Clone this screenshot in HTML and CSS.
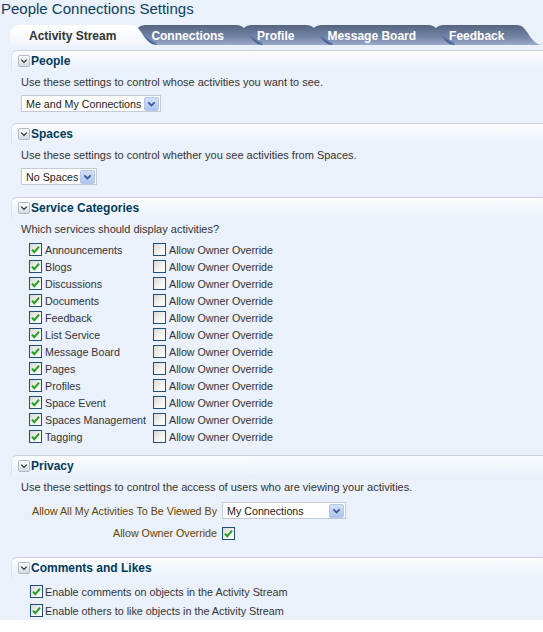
FILE: index.html
```html
<!DOCTYPE html>
<html>
<head>
<meta charset="utf-8">
<link rel="stylesheet" href="styles.css">
</head>
<body>
<div class="page">
  <h1 class="title">People Connections Settings</h1>
  <div class="tabs">
    <div class="tab active"><span class="tab-body">Activity Stream</span><svg class="tab-end" width="32" height="20" viewBox="0 0 32 20"><defs><linearGradient id="ga" x1="0" y1="0" x2="0" y2="1"><stop offset="0" stop-color="#ffffff"/><stop offset="1" stop-color="#f1f5fb"/></linearGradient></defs><path d="M0 0 H5 C12 0 14 4 18 10 C22 16 26 20 32 20 H0 Z" fill="url(#ga)"/></svg></div>
    <div class="tab"><span class="tab-body">Connections</span><svg class="tab-end" width="32" height="20" viewBox="0 0 32 20"><defs><linearGradient id="gi1" x1="0" y1="0" x2="0" y2="1"><stop offset="0" stop-color="#56647f"/><stop offset="0.6" stop-color="#7384a7"/><stop offset="1" stop-color="#9aabca"/></linearGradient></defs><path d="M0 0 H5 C12 0 14 4 18 10 C22 16 26 20 32 20 H0 Z" fill="url(#gi1)"/></svg></div>
    <div class="tab"><span class="tab-body">Profile</span><svg class="tab-end" width="32" height="20" viewBox="0 0 32 20"><path d="M0 0 H5 C12 0 14 4 18 10 C22 16 26 20 32 20 H0 Z" fill="url(#gi1)"/></svg></div>
    <div class="tab"><span class="tab-body">Message Board</span><svg class="tab-end" width="32" height="20" viewBox="0 0 32 20"><path d="M0 0 H5 C12 0 14 4 18 10 C22 16 26 20 32 20 H0 Z" fill="url(#gi1)"/></svg></div>
    <div class="tab"><span class="tab-body">Feedback</span><svg class="tab-end" width="32" height="20" viewBox="0 0 32 20"><path d="M0 0 H5 C12 0 14 4 18 10 C22 16 26 20 32 20 H0 Z" fill="url(#gi1)"/></svg></div>
  </div>

  <div class="section">
    <div class="section-head"><span class="toggle"><svg width="10" height="10" viewBox="0 0 10 10"><path d="M2.2 3.6 L5 6.4 L7.8 3.6" fill="none" stroke="#2a2a2a" stroke-width="1.2"/></svg></span><span class="head-text">People</span></div>
    <div class="section-body">
      <div class="desc">Use these settings to control whose activities you want to see.</div>
      <div class="select w140"><span class="sel-text">Me and My Connections</span><span class="sel-btn"><svg width="15" height="14" viewBox="0 0 15 14"><path d="M3.8 5 L7.5 8.7 L11.2 5" fill="none" stroke="#3a5a9c" stroke-width="2"/></svg></span></div>
    </div>
  </div>

  <div class="section">
    <div class="section-head"><span class="toggle"><svg width="10" height="10" viewBox="0 0 10 10"><path d="M2.2 3.6 L5 6.4 L7.8 3.6" fill="none" stroke="#2a2a2a" stroke-width="1.2"/></svg></span><span class="head-text">Spaces</span></div>
    <div class="section-body pb12">
      <div class="desc">Use these settings to control whether you see activities from Spaces.</div>
      <div class="select w76"><span class="sel-text">No Spaces</span><span class="sel-btn"><svg width="15" height="14" viewBox="0 0 15 14"><path d="M3.8 5 L7.5 8.7 L11.2 5" fill="none" stroke="#3a5a9c" stroke-width="2"/></svg></span></div>
    </div>
  </div>

  <div class="section">
    <div class="section-head"><span class="toggle"><svg width="10" height="10" viewBox="0 0 10 10"><path d="M2.2 3.6 L5 6.4 L7.8 3.6" fill="none" stroke="#2a2a2a" stroke-width="1.2"/></svg></span><span class="head-text">Service Categories</span></div>
    <div class="section-body pb10">
      <div class="desc">Which services should display activities?</div>
      <div class="services">
        <div class="svc-row"><span class="item"><span class="cb"><svg width="11" height="11" viewBox="0 0 11 11"><path d="M2 5.6 L4.3 8.2 L9 2.6" fill="none" stroke="#22a022" stroke-width="2"/></svg></span>Announcements</span><span class="item"><span class="cb"></span>Allow Owner Override</span></div>
        <div class="svc-row"><span class="item"><span class="cb"><svg width="11" height="11" viewBox="0 0 11 11"><path d="M2 5.6 L4.3 8.2 L9 2.6" fill="none" stroke="#22a022" stroke-width="2"/></svg></span>Blogs</span><span class="item"><span class="cb"></span>Allow Owner Override</span></div>
        <div class="svc-row"><span class="item"><span class="cb"><svg width="11" height="11" viewBox="0 0 11 11"><path d="M2 5.6 L4.3 8.2 L9 2.6" fill="none" stroke="#22a022" stroke-width="2"/></svg></span>Discussions</span><span class="item"><span class="cb"></span>Allow Owner Override</span></div>
        <div class="svc-row"><span class="item"><span class="cb"><svg width="11" height="11" viewBox="0 0 11 11"><path d="M2 5.6 L4.3 8.2 L9 2.6" fill="none" stroke="#22a022" stroke-width="2"/></svg></span>Documents</span><span class="item"><span class="cb"></span>Allow Owner Override</span></div>
        <div class="svc-row"><span class="item"><span class="cb"><svg width="11" height="11" viewBox="0 0 11 11"><path d="M2 5.6 L4.3 8.2 L9 2.6" fill="none" stroke="#22a022" stroke-width="2"/></svg></span>Feedback</span><span class="item"><span class="cb"></span>Allow Owner Override</span></div>
        <div class="svc-row"><span class="item"><span class="cb"><svg width="11" height="11" viewBox="0 0 11 11"><path d="M2 5.6 L4.3 8.2 L9 2.6" fill="none" stroke="#22a022" stroke-width="2"/></svg></span>List Service</span><span class="item"><span class="cb"></span>Allow Owner Override</span></div>
        <div class="svc-row"><span class="item"><span class="cb"><svg width="11" height="11" viewBox="0 0 11 11"><path d="M2 5.6 L4.3 8.2 L9 2.6" fill="none" stroke="#22a022" stroke-width="2"/></svg></span>Message Board</span><span class="item"><span class="cb"></span>Allow Owner Override</span></div>
        <div class="svc-row"><span class="item"><span class="cb"><svg width="11" height="11" viewBox="0 0 11 11"><path d="M2 5.6 L4.3 8.2 L9 2.6" fill="none" stroke="#22a022" stroke-width="2"/></svg></span>Pages</span><span class="item"><span class="cb"></span>Allow Owner Override</span></div>
        <div class="svc-row"><span class="item"><span class="cb"><svg width="11" height="11" viewBox="0 0 11 11"><path d="M2 5.6 L4.3 8.2 L9 2.6" fill="none" stroke="#22a022" stroke-width="2"/></svg></span>Profiles</span><span class="item"><span class="cb"></span>Allow Owner Override</span></div>
        <div class="svc-row"><span class="item"><span class="cb"><svg width="11" height="11" viewBox="0 0 11 11"><path d="M2 5.6 L4.3 8.2 L9 2.6" fill="none" stroke="#22a022" stroke-width="2"/></svg></span>Space Event</span><span class="item"><span class="cb"></span>Allow Owner Override</span></div>
        <div class="svc-row"><span class="item"><span class="cb"><svg width="11" height="11" viewBox="0 0 11 11"><path d="M2 5.6 L4.3 8.2 L9 2.6" fill="none" stroke="#22a022" stroke-width="2"/></svg></span>Spaces Management</span><span class="item"><span class="cb"></span>Allow Owner Override</span></div>
        <div class="svc-row"><span class="item"><span class="cb"><svg width="11" height="11" viewBox="0 0 11 11"><path d="M2 5.6 L4.3 8.2 L9 2.6" fill="none" stroke="#22a022" stroke-width="2"/></svg></span>Tagging</span><span class="item"><span class="cb"></span>Allow Owner Override</span></div>
      </div>
    </div>
  </div>

  <div class="section">
    <div class="section-head"><span class="toggle"><svg width="10" height="10" viewBox="0 0 10 10"><path d="M2.2 3.6 L5 6.4 L7.8 3.6" fill="none" stroke="#2a2a2a" stroke-width="1.2"/></svg></span><span class="head-text">Privacy</span></div>
    <div class="section-body pb17">
      <div class="desc">Use these settings to control the access of users who are viewing your activities.</div>
      <div class="privacy-form">
        <span class="form-label">Allow All My Activities To Be Viewed By</span>
        <div class="select w124"><span class="sel-text">My Connections</span><span class="sel-btn"><svg width="15" height="14" viewBox="0 0 15 14"><path d="M3.8 5 L7.5 8.7 L11.2 5" fill="none" stroke="#3a5a9c" stroke-width="2"/></svg></span></div>
        <span class="form-label">Allow Owner Override</span>
        <span class="cb"><svg width="11" height="11" viewBox="0 0 11 11"><path d="M2 5.6 L4.3 8.2 L9 2.6" fill="none" stroke="#22a022" stroke-width="2"/></svg></span>
      </div>
    </div>
  </div>

  <div class="section">
    <div class="section-head"><span class="toggle"><svg width="10" height="10" viewBox="0 0 10 10"><path d="M2.2 3.6 L5 6.4 L7.8 3.6" fill="none" stroke="#2a2a2a" stroke-width="1.2"/></svg></span><span class="head-text">Comments and Likes</span></div>
    <div class="section-body pb0">
      <div class="likes">
        <div class="like-row"><span class="cb"><svg width="11" height="11" viewBox="0 0 11 11"><path d="M2 5.6 L4.3 8.2 L9 2.6" fill="none" stroke="#22a022" stroke-width="2"/></svg></span>Enable comments on objects in the Activity Stream</div>
        <div class="like-row"><span class="cb"><svg width="11" height="11" viewBox="0 0 11 11"><path d="M2 5.6 L4.3 8.2 L9 2.6" fill="none" stroke="#22a022" stroke-width="2"/></svg></span>Enable others to like objects in the Activity Stream</div>
      </div>
    </div>
  </div>
</div>
</body>
</html>
```
FILE: styles.css
```css
* { box-sizing: border-box; }
html, body { margin: 0; padding: 0; background: #ffffff; }
body {
  font-family: "Liberation Sans", Arial, sans-serif;
  font-size: 11px;
  color: #333333;
}
.page {
  width: 543px;
  background: #ebf1fb;
  overflow: hidden;
}
.title {
  margin: 0;
  height: 25px;
  padding-left: 1px;
  font-size: 15px;
  font-weight: normal;
  line-height: 18px;
  color: #0b3d5f;
}
.tabs {
  display: flex;
  height: 20px;
  padding-left: 10px;
  margin-bottom: 5px;
}
.tab {
  display: flex;
  height: 20px;
  margin-right: -22px;
  position: relative;
}
.tab:nth-child(1) { z-index: 5; }
.tab:nth-child(2) { z-index: 4; }
.tab:nth-child(3) { z-index: 3; }
.tab:nth-child(4) { z-index: 2; }
.tab:nth-child(5) { z-index: 1; }
.tab-body {
  display: block;
  height: 20px;
  padding: 4px 7px 0 16px;
  line-height: 15px;
  font-size: 12px;
  font-weight: bold;
  color: #ffffff;
  white-space: nowrap;
  border-top-left-radius: 10px 9px;
  background:
    linear-gradient(to top right, #32528e 0, #3a5a95 45%, rgba(58,90,149,0) 60%) left bottom / 22px 13px no-repeat,
    linear-gradient(#56647f, #7384a7 60%, #9aabca);
}
.tab.active .tab-body {
  padding-left: 19px;
  padding-right: 9px;
  color: #333333;
  background: linear-gradient(#ffffff, #f1f5fb);
}
.tab-end { display: block; flex: none; }

.section {
  margin-left: 11px;
}
.section-head {
  height: 21px;
  display: flex;
  align-items: center;
  padding-left: 6px;
  border-top: 1px solid #c7cfdb;
  border-left: 1px solid #dfe5ee;
  border-top-left-radius: 6px;
  background: linear-gradient(#fbfcfe, #f1f5fc 60%, #ebf1fb);
}
.toggle {
  width: 12px;
  height: 12px;
  flex: none;
  border: 1px solid #b3b9c3;
  border-radius: 2px;
  background: linear-gradient(#fdfdfd, #d5d9e0);
  display: flex;
  align-items: center;
  justify-content: center;
}
.toggle svg { display: block; }
.head-text {
  margin-left: 1px;
  font-size: 12px;
  font-weight: bold;
  color: #003c5c;
  line-height: 14px;
}
.section-body {
  padding: 0 0 11px 10px;
}
.section-body.pb12 { padding-bottom: 12px; }
.section-body.pb10 { padding-bottom: 10px; }
.section-body.pb17 { padding-bottom: 17px; }
.section-body.pb0 { padding-bottom: 0; }
.desc {
  margin-top: 4px;
  line-height: 14px;
  white-space: nowrap;
}
.select {
  margin-top: 6px;
  height: 17px;
  display: flex;
  align-items: center;
  background: #ffffff;
  border: 1px solid #c4cbd6;
  padding-left: 4px;
  padding-right: 1px;
  color: #1a1a1a;
}
.privacy-form .select { margin-top: 0; }
.select.w140 { width: 140px; }
.select.w76 { width: 76px; }
.select.w124 { width: 124px; }
.sel-text { flex: 1; white-space: nowrap; line-height: 14px; font-size: 10.7px; }
.sel-btn {
  width: 15px;
  height: 14px;
  flex: none;
  border-radius: 2px;
  background: linear-gradient(#d3e0f8, #afc5ef);
  border: 1px solid #b4c6ea;
  display: flex;
  align-items: center;
  justify-content: center;
}
.sel-btn svg { display: block; width: 13px; height: 12px; }

.services {
  margin-top: 5px;
  margin-left: 8px;
}
.svc-row {
  display: grid;
  grid-template-columns: 124px auto;
  height: 17px;
  align-items: center;
}
.item {
  display: flex;
  align-items: center;
  gap: 3px;
  white-space: nowrap;
  line-height: 14px;
  font-size: 10.7px;
}
.cb {
  width: 13px;
  height: 13px;
  flex: none;
  border: 1px solid #1d4f7d;
  background: linear-gradient(135deg, #d9d9d2, #f4f4f1 60%, #ffffff);
  display: flex;
  align-items: center;
  justify-content: center;
}
.cb svg { display: block; }

.privacy-form {
  margin-top: 8px;
  display: grid;
  grid-template-columns: 196px auto;
  column-gap: 5px;
  row-gap: 7px;
  align-items: center;
  justify-items: start;
}
.form-label {
  justify-self: end;
  color: #5f4400;
  white-space: nowrap;
  line-height: 14px;
  font-size: 10.7px;
}

.likes {
  margin-top: 4px;
  margin-left: 9px;
}
.like-row {
  display: flex;
  align-items: center;
  gap: 2px;
  height: 19px;
  white-space: nowrap;
  font-size: 10.8px;
}
```
